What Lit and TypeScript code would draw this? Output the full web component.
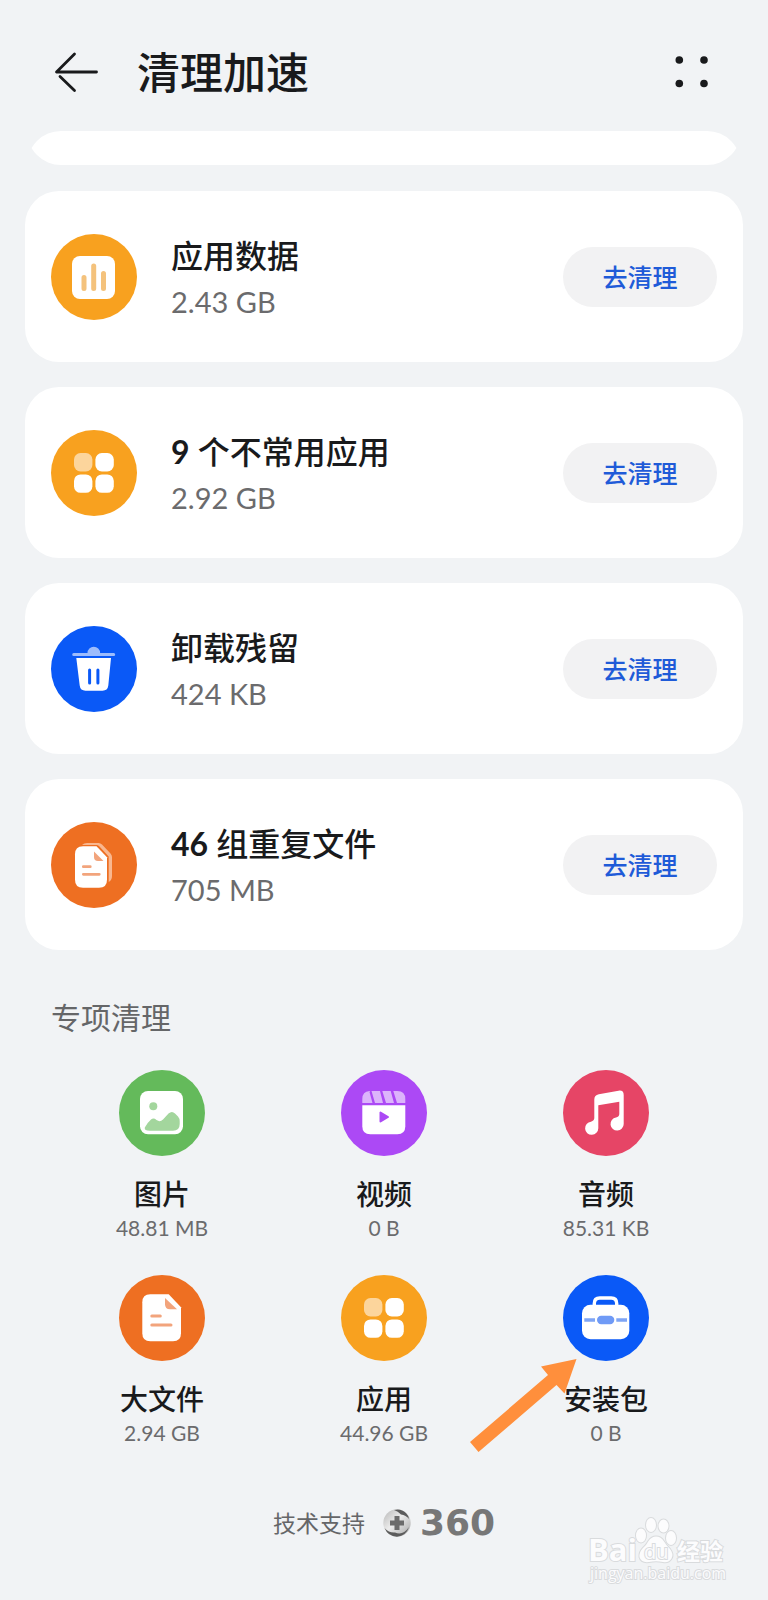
import { LitElement, html, svg, css, nothing } from "lit";
import { customElement, property } from "lit/decorators.js";

type IconName =
  | "data" | "apps" | "trash" | "copies" | "photo" | "video" | "music" | "file" | "case";

const icons: Record<IconName, { color: string; art: unknown }> = {
  data: {
    color: "#f8a11f",
    art: svg`
      <rect x="21" y="22" width="43" height="43" rx="8" fill="#fff"/>
      <g stroke="#f4c27c" stroke-width="5" stroke-linecap="round">
        <path d="M33 43.5V54.5M42.7 32V54.5M52.5 39.5V54.5"/>
      </g>`,
  },
  apps: {
    color: "#f8a11f",
    art: svg`
      <rect x="23" y="23" width="18.4" height="18.4" rx="6.5" fill="#fcd59c"/>
      <rect x="44.4" y="23" width="18.4" height="18.4" rx="6.5" fill="#fff"/>
      <rect x="23" y="44.4" width="18.4" height="18.4" rx="6.5" fill="#fff"/>
      <rect x="44.4" y="44.4" width="18.4" height="18.4" rx="6.5" fill="#fff"/>`,
  },
  trash: {
    color: "#0a59f7",
    art: svg`
      <path d="M36.5 27a6.3 6.3 0 0 1 12.6 0H62.7a1.5 1.5 0 0 1 0 3H22.7a1.5 1.5 0 0 1 0-3Z" fill="#9dbcfc"/>
      <path d="M25.3 32H60L57.3 59.500Q56.700 64.700 51.500 64.700H34.500Q29.300 64.700 28.700 59.500Z" fill="#fff"/>
      <path d="M38.600 44V57M46.900 44V57" stroke="#0a59f7" stroke-width="3" stroke-linecap="round"/>`,
  },
  copies: {
    color: "#ee6f22",
    art: svg`
      <path d="M31 23Q33 21 36 21H47.500Q49.500 21 51 22.500L59.500 31.500Q61 33 61 35V54Q61 58 57.700 60V34.500L48 24Q47 23 45.500 23Z" fill="#f9b78f"/>
      <path d="M32 24.300H45.500L56 35.300V57.700Q56 65.700 48 65.700H32Q24 65.700 24 57.700V32.300Q24 24.300 32 24.300Z" fill="#fff"/>
      <path d="M43 29.500L52.500 39H47Q43 39 43 35Z" fill="#f2a47c"/>
      <path d="M32.300 44.700H39.300M32.300 52.300H48.300" stroke="#f2a47c" stroke-width="2.700" stroke-linecap="round"/>`,
  },
  photo: {
    color: "#64ba5b",
    art: svg`
      <rect x="21" y="21" width="43" height="43.300" rx="8" fill="#fff"/>
      <circle cx="34.300" cy="36.300" r="4" fill="#a3d69d"/>
      <path d="M25.800 57.500Q29 52 32 49.500Q34.700 47.500 37.500 50Q41 52.500 44 49.500L49.500 43.500Q53 40.500 56 43.500L59 46.500Q60.700 48.500 60.700 51V54Q60.700 60.700 54 60.700H31Q25 60.700 25.800 57.500Z" fill="#a3d69d"/>`,
  },
  video: {
    color: "#ac49f5",
    art: svg`
      <path d="M29.300 21H28.500Q21.300 21.500 21.300 29V33H31.500L28.500 22Z M30.500 21H39L42 33H34Z M41.300 21H49.700L53 33H45Z M52.300 21H56.300Q64.300 21 64.300 29V33H56Z" fill="#dcb4fb"/>
      <path d="M21.300 35.300H64.300V56.300Q64.300 64.300 56.300 64.300H29.300Q21.300 64.300 21.300 56.300Z" fill="#fff"/>
      <path d="M39.500 42.500V51.500L47 47Z" fill="#ac49f5" stroke="#ac49f5" stroke-width="2" stroke-linejoin="round"/>`,
  },
  music: {
    color: "#e64566",
    art: svg`
      <path d="M31.300 29.500Q31.300 25 35.800 24.200L55.500 20.700Q60.700 20 60.700 25V54A6.600 6.600 0 1 1 53 47.500Q56.300 46.500 56.300 44V31.700L35.300 35.300V58.300A6.600 6.600 0 1 1 28 51.700Q31.300 50.700 31.300 48Z" fill="#fff"/>`,
  },
  file: {
    color: "#ee6f22",
    art: svg`
      <path d="M31.300 19.300H49.700L62 32.300V58.300Q62 66.300 54 66.300H31.300Q23.300 66.300 23.300 58.300V27.300Q23.300 19.300 31.300 19.300Z" fill="#fff"/>
      <path d="M46 23L58 34.300H51Q46 34.300 46 29.300Z" fill="#f2a47c"/>
      <path d="M32.800 41H41.300M32.800 50H52" stroke="#f2a47c" stroke-width="3" stroke-linecap="round"/>`,
  },
  case: {
    color: "#0a59f7",
    art: svg`
      <path d="M31.300 31V28.500Q31.300 23 36.800 23H48.200Q53.700 23 53.700 28.500V31" fill="none" stroke="#fff" stroke-width="3.400"/>
      <rect x="19" y="29.700" width="47.300" height="34.500" rx="8.500" fill="#fff"/>
      <path d="M21.300 45H32M53.300 45H64" stroke="#7fa5f5" stroke-width="3.400"/>
      <rect x="34" y="40.800" width="17.300" height="8.400" rx="4.200" fill="#6f9af6"/>`,
  },
};

const disc = (name: IconName) => html`
  <svg class="disc" viewBox="0 0 86 86" aria-hidden="true">
    <circle cx="43" cy="43" r="43" fill=${icons[name].color}></circle>
    ${icons[name].art}
  </svg>`;

const shared = css`
  * { box-sizing: border-box; }
  .disc { display: block; width: 86px; height: 86px; flex: none; }
  button { font: inherit; color: inherit; border: 0; padding: 0; background: none; cursor: pointer; }
`;

@customElement("clean-card")
class CleanCard extends LitElement {
  @property() icon: IconName = "data";
  @property() count = "";
  @property() heading = "";
  @property() size = "";

  static styles = [shared, css`
    :host { display: block; }
    .card {
      display: flex; align-items: center; gap: 34px;
      min-height: 171px; padding: 26px; border-radius: 34px; background: #fff;
    }
    .text { flex: 1; min-width: 0; }
    h2 { margin: 0; font-size: 32px; line-height: 50px; font-weight: 500; color: #191a1c; }
    .count { font-weight: 700; }
    p { margin: 0; font-size: 29px; line-height: 42px; color: #6b6b6d; }
    .action {
      width: 154px; height: 60px; border-radius: 30px; background: #f2f2f3;
      font-size: 25px; line-height: 36px; font-weight: 500; color: #1f5bd8;
    }
  `];

  render() {
    return html`
      <article class="card">
        ${disc(this.icon)}
        <div class="text">
          <h2>${this.count ? html`<span class="count">${this.count}</span> ` : nothing}${this.heading}</h2>
          <p>${this.size}</p>
        </div>
        <button class="action" type="button">去清理</button>
      </article>`;
  }
}

@customElement("category-tile")
class CategoryTile extends LitElement {
  @property() icon: IconName = "photo";
  @property() label = "";
  @property() size = "";
  @property({ type: Boolean }) pointed = false;

  static styles = [shared, css`
    :host { display: block; position: relative; }
    .tile { display: flex; flex-direction: column; align-items: center; width: 100%; }
    .label { margin-top: 20px; font-size: 28px; line-height: 36px; font-weight: 500; color: #191a1c; }
    .size { font-size: 21px; line-height: 32px; color: #6b6b6d; }
    .pointer {
      position: absolute; top: 84px; left: -25px; width: 107px; height: 93px; pointer-events: none;
    }
  `];

  render() {
    return html`
      ${this.pointed
        ? html`<svg class="pointer" viewBox="0 0 107 93" aria-hidden="true">
            <path d="M106.500 0L94.500 34.500L86.500 26L8.500 93L0 83L78 16L71 7.500Z" fill="#ff8f3c"/>
          </svg>`
        : nothing}
      <button class="tile" type="button">
        ${disc(this.icon)}
        <span class="label">${this.label}</span>
        <span class="size">${this.size}</span>
      </button>`;
  }
}

const cards: { icon: IconName; count?: string; heading: string; size: string }[] = [
  { icon: "data", heading: "应用数据", size: "2.43 GB" },
  { icon: "apps", count: "9", heading: "个不常用应用", size: "2.92 GB" },
  { icon: "trash", heading: "卸载残留", size: "424 KB" },
  { icon: "copies", count: "46", heading: "组重复文件", size: "705 MB" },
];

const tiles: { icon: IconName; label: string; size: string; pointed?: boolean }[] = [
  { icon: "photo", label: "图片", size: "48.81 MB" },
  { icon: "video", label: "视频", size: "0 B" },
  { icon: "music", label: "音频", size: "85.31 KB" },
  { icon: "file", label: "大文件", size: "2.94 GB" },
  { icon: "apps", label: "应用", size: "44.96 GB" },
  { icon: "case", label: "安装包", size: "0 B", pointed: true },
];

@customElement("app-root")
class AppRoot extends LitElement {
  static styles = [shared, css`
    :host {
      display: block; position: relative; min-height: 100vh; background: #f1f3f5;
      font-family: Lato, "Noto Sans CJK SC", sans-serif; color: #191a1c;
    }
    header { display: flex; align-items: center; height: 131px; padding: 14px 51px 0; }
    .back, .more { display: block; width: 50px; height: 50px; }
    .back svg, .more svg { display: block; width: 50px; height: 50px; }
    h1 { flex: 1; margin: 0 0 0 36px; font-size: 43px; line-height: 60px; font-weight: 500; }
    main { padding: 0 25px; }
    .peek { padding: 0 2px 26px; }
    .edge { display: flex; height: 17px; overflow: hidden; }
    .edge::before { content: ""; flex: 1 0 auto; height: 68px; border-radius: 34px; background: #fff; }
    .lower { align-items: flex-end; }
    .cards { display: flex; flex-direction: column; gap: 25px; }
    .section { margin: 44px 26px 30px; font-size: 30px; line-height: 46px; font-weight: 400; color: #656668; }
    .grid { display: grid; grid-template-columns: repeat(3, 1fr); row-gap: 31px; padding: 0 26px; }
    footer { display: flex; align-items: flex-start; justify-content: center; padding: 56px 0 60px; }
    .support { font-size: 23px; line-height: 36px; color: #656668; }
    .badge { width: 28px; height: 28px; margin: 4px 9px 0 18px; }
    .brand { font-family: "DejaVu Sans", sans-serif; font-weight: 700; font-size: 36px; line-height: 36px; color: #777; }
    .mark {
      position: absolute; right: 40px; bottom: 12px; width: 140px; height: 72px;
      font-family: "Open Sans", "Noto Sans CJK SC", sans-serif;
    }
    .mark svg { display: block; width: 100%; height: 100%; overflow: visible; }
    .ink { fill: #fcfcfd; stroke: #d9dbdd; stroke-width: 2px; paint-order: stroke; }
    .bold { font-weight: 700; }
  `];

  render() {
    return html`
      <header>
        <button class="back" type="button" aria-label="返回">
          <svg viewBox="0 0 50 50" fill="none" stroke="#191a1c" stroke-width="2.800" stroke-linecap="round" stroke-linejoin="round">
            <path d="M23.500 6L5.500 24H45.500M9 28.500L23.500 42.500"/>
          </svg>
        </button>
        <h1>清理加速</h1>
        <button class="more" type="button" aria-label="更多">
          <svg viewBox="0 0 50 50" fill="#191a1c">
            <circle cx="12.300" cy="12" r="3.800"/><circle cx="37" cy="12" r="3.800"/>
            <circle cx="12.300" cy="35.500" r="3.800"/><circle cx="37" cy="35.500" r="3.800"/>
          </svg>
        </button>
      </header>
      <main>
        <div class="peek">
          <div class="edge"></div>
          <div class="edge lower"></div>
        </div>
        <div class="cards">
          ${cards.map((c) => html`
            <clean-card .icon=${c.icon} .count=${c.count ?? ""} .heading=${c.heading} .size=${c.size}></clean-card>`)}
        </div>
        <h2 class="section">专项清理</h2>
        <div class="grid">
          ${tiles.map((t) => html`
            <category-tile .icon=${t.icon} .label=${t.label} .size=${t.size} .pointed=${!!t.pointed}></category-tile>`)}
        </div>
      </main>
      <footer>
        <span class="support">技术支持</span>
        <svg class="badge" viewBox="0 0 28 28" aria-hidden="true">
          <defs>
            <linearGradient id="ball" x1="0" y1="0" x2="1" y2="1">
              <stop offset="0" stop-color="#b5b5b5"/><stop offset="0.450" stop-color="#ececec"/><stop offset="1" stop-color="#a5a5a5"/>
            </linearGradient>
          </defs>
          <circle cx="14" cy="14" r="13.700" fill="url(#ball)"/>
          <path d="M11 1Q18 -1 23 4Q26 7 26 10Q23 6 18 5.500Q15 2 11 1Z" fill="#5c5c5c"/>
          <path d="M1.500 19Q6 24 12 23.500Q20 27 26 18Q23 27 14 27.700Q5 27.500 1.500 19Z" fill="#5c5c5c"/>
          <path d="M11.500 7h5v4.500h4.500v5h-4.500v4.500h-5v-4.500h-4.500v-5h4.500Z" fill="#6b6b6b"/>
        </svg>
        <span class="brand">360</span>
      </footer>
      <div class="mark">
        <svg viewBox="0 0 140 72" role="img" aria-label="Baidu">
          <g class="ink">
            <text class="bold" x="0" y="44" font-size="31">Bai</text>
            <ellipse cx="53" cy="18.500" rx="5" ry="7"/>
            <ellipse cx="63" cy="8" rx="5" ry="7"/>
            <ellipse cx="75.500" cy="9" rx="5" ry="6.500"/>
            <ellipse cx="83" cy="21" rx="5" ry="7"/>
            <path d="M68 19.500Q73 19.500 76 24.500Q78 28 82 32Q86 37 83.500 41.500Q81 46 75 45Q68 43.500 61 45Q53 46 51.500 40Q51 35 55 31Q58.500 28 60.500 24Q63.500 19.500 68 19.500Z"/>
            <text x="56" y="42" font-size="20">du</text>
            <text class="bold" x="89" y="43" font-size="23">经验</text>
            <text x="2" y="62" font-size="16">jingyan.baidu.com</text>
          </g>
        </svg>
      </div>`;
  }
}
